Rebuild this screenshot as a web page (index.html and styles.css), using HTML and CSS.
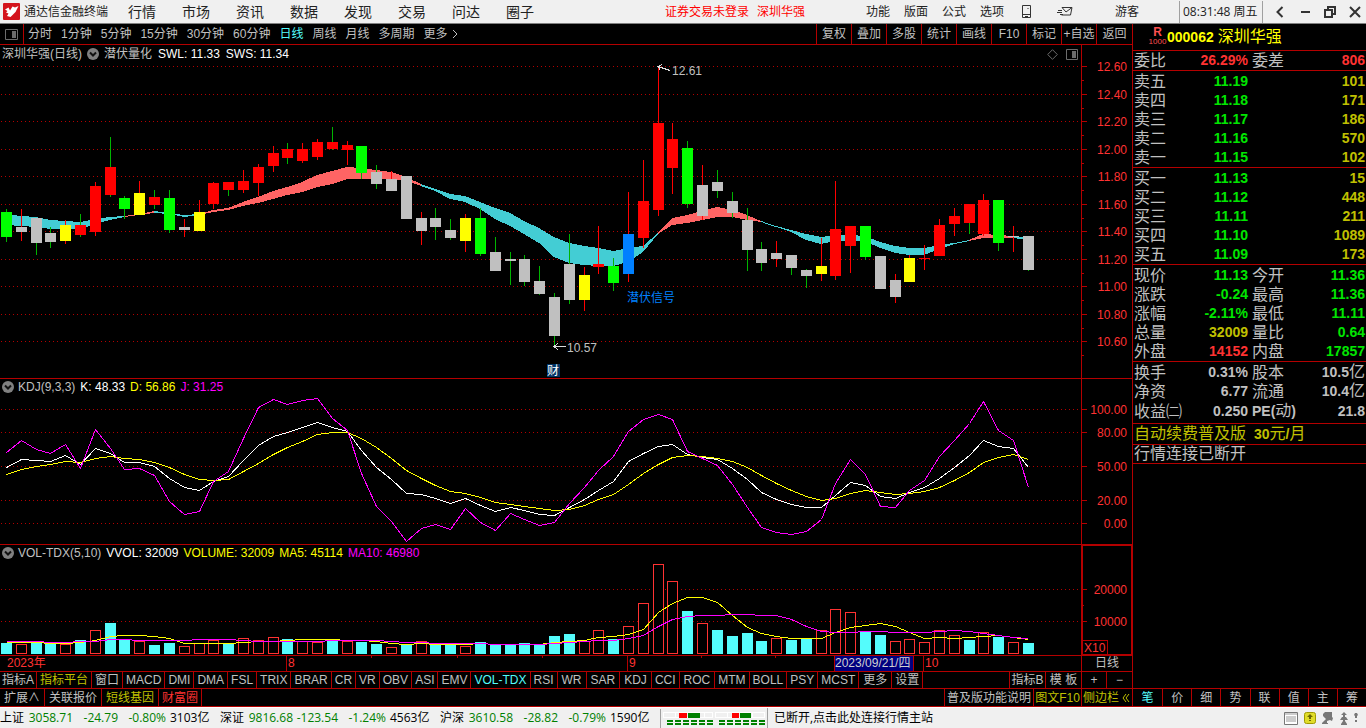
FILE: index.html
```html
<!DOCTYPE html>
<html lang="zh-CN">
<head>
<meta charset="utf-8">
<title>通达信金融终端</title>
<link rel="stylesheet" href="styles.css">
</head>
<body>
<header class="titlebar">
  <svg class="logo" width="17" height="17" viewBox="0 0 17 17" aria-hidden="true"><rect width="17" height="17" rx="1" fill="#d4141c"/><path d="M2 6.500 5.500 4.500 7 7.500 9.500 3.500 12 4.500 15.500 3 12.500 9 7.500 14 4 13 5.500 10.500 3 9.500 4.500 8z" fill="#fff"/></svg>
  <h1 class="app-name">通达信金融终端</h1>
  <nav class="menu">
    <button>行情</button><button>市场</button><button>资讯</button><button>数据</button><button>发现</button><button>交易</button><button>问达</button><button>圈子</button>
  </nav>
  <p class="login-note"><span>证券交易未登录</span><span>深圳华强</span></p>
  <nav class="tools">
    <button>功能</button><button>版面</button><button>公式</button><button>选项</button>
  </nav>
  <div class="title-icons">
    <button aria-label="手机"><svg width="10" height="14" viewBox="0 0 10 14"><path d="M.5.5h8v12h-8zM.5 9.500h8M3 11.500h3M5.500 3.500h1" fill="none" stroke="#333"/></svg></button>
    <button aria-label="邮件"><svg width="16" height="12" viewBox="0 0 16 12"><path d="M5 1.500h10L13.500 9H4.500M5 1.500 9 6l6-4.500M1 4.500h4M0 6.500h5M3 8.500h3" fill="none" stroke="#333"/></svg></button>
  </div>
  <button class="guest">游客</button>
  <time class="clock">08:31:48 周五</time>
  <div class="window-buttons">
    <button aria-label="返回"><svg width="14" height="14" viewBox="0 0 14 14"><path d="M9.500 2 4.500 7l5 5" class="thick"/></svg></button>
    <button aria-label="最小化"><svg width="14" height="14" viewBox="0 0 14 14"><path d="M3 7h9" class="thick"/></svg></button>
    <button aria-label="还原"><svg width="14" height="14" viewBox="0 0 14 14"><path d="M2 5h7v7H2zM5 5V2h7v7H9" class="thick"/></svg></button>
    <button aria-label="关闭"><svg width="14" height="14" viewBox="0 0 14 14"><path d="m2 2 10 10M12 2 2 12" class="thick"/></svg></button>
  </div>
</header>

<div class="workspace">
  <main class="charts">
    <div class="toolbar">
      <button class="layout-toggle" aria-label="布局"><svg width="13" height="11" viewBox="0 0 13 11"><path d="M.5.5h12v10H.5z" fill="none" stroke="#6c6c6c"/><path d="M7 2h4v7H7z" fill="#6c6c6c"/></svg></button>
      <nav class="periods">
        <button>分时</button><button>1分钟</button><button>5分钟</button><button>15分钟</button><button>30分钟</button><button>60分钟</button><button class="current">日线</button><button>周线</button><button>月线</button><button>多周期</button><button class="more">更多<svg width="6" height="10" viewBox="0 0 6 10"><path d="m1 1 4 4-4 4" fill="none" stroke="#c0c0c0"/></svg></button>
      </nav>
      <nav class="actions">
        <button>复权</button><button>叠加</button><button>多股</button><button>统计</button><button>画线</button><button>F10</button><button>标记</button><button>+自选</button><button class="last">返回</button>
      </nav>
    </div>

    <div class="panels">
    <section class="panel">
      <div class="plot">
        <div class="head head-price">
          <span>深圳华强(日线)</span><svg class="fold" viewBox="0 0 12 12"><circle cx="6" cy="6" r="6"/><path d="m3 4.500 3 3 3-3"/></svg><span>潜伏量化</span><span class="white pad">SWL: 11.33</span><span class="white pad">SWS: 11.34</span>
          <span class="head-icons"><svg width="11" height="11" viewBox="0 0 11 11"><path d="M5.500.7 10.300 5.500 5.500 10.300.7 5.500z" fill="none" stroke="#6c6c6c"/></svg><svg width="12" height="11" viewBox="0 0 12 11"><path d="M.5.5h11v10H.5z" fill="none" stroke="#6c6c6c"/><path d="M6 2h4v7H6z" fill="#6c6c6c"/></svg></span>
        </div>
        <svg id="price" class="canvas" viewBox="0 63 1081 315" preserveAspectRatio="none"></svg>
      </div>
      <svg id="price-axis" class="axis" viewBox="1082 45 50 333" preserveAspectRatio="none"></svg>
    </section>

    <section class="panel">
      <div class="plot">
        <div class="head">
          <svg class="fold" viewBox="0 0 12 12"><circle cx="6" cy="6" r="6"/><path d="m3 4.500 3 3 3-3"/></svg><span>KDJ(9,3,3)</span><span class="white">K: 48.33</span><span class="yellow">D: 56.86</span><span class="magenta">J: 31.25</span>
        </div>
        <svg id="kdj" class="canvas" viewBox="0 395 1081 149" preserveAspectRatio="none"></svg>
      </div>
      <svg id="kdj-axis" class="axis" viewBox="1082 379 50 165" preserveAspectRatio="none"></svg>
    </section>

    <section class="panel">
      <div class="plot">
        <div class="head">
          <svg class="fold" viewBox="0 0 12 12"><circle cx="6" cy="6" r="6"/><path d="m3 4.500 3 3 3-3"/></svg><span>VOL-TDX(5,10)</span><span class="white">VVOL: 32009</span><span class="yellow">VOLUME: 32009</span><span class="yellow">MA5: 45114</span><span class="magenta">MA10: 46980</span>
        </div>
        <svg id="volume" class="canvas" viewBox="0 561 1081 94" preserveAspectRatio="none"></svg>
      </div>
      <svg id="volume-axis" class="axis axis-selected" viewBox="1082 545 50 110" preserveAspectRatio="none"></svg>
    </section>
    </div>

    <div class="timeline">
      <div class="months"><span class="first">2023年</span><span>8</span><span>9</span><span class="cursor"><time>2023/09/21/四</time></span><span>10</span></div>
      <span class="period-name">日线</span>
    </div>

    <div class="tabs">
      <nav class="cells">
        <button class="tight">指标A</button><button class="gold">指标平台</button><button>窗口</button><button>MACD</button><button>DMI</button><button>DMA</button><button>FSL</button><button>TRIX</button><button>BRAR</button><button>CR</button><button>VR</button><button>OBV</button><button>ASI</button><button>EMV</button><button class="current">VOL-TDX</button><button>RSI</button><button class="roomy">WR</button><button class="roomy">SAR</button><button class="roomy">KDJ</button><button>CCI</button><button class="roomy">ROC</button><button>MTM</button><button>BOLL</button><button>PSY</button><button>MCST</button><button class="roomy">更多</button><button>设置</button>
      </nav>
      <nav class="cells cells-right">
        <button class="slot">指标B</button><button class="slot">模 板</button><button class="zoom">+</button><button class="zoom last">−</button>
      </nav>
    </div>

    <div class="tabs tabs-extra">
      <nav class="cells">
        <button class="roomy">扩展∧</button><button class="roomy">关联报价</button><button class="gold roomy">短线基因</button><button class="red">财富圈</button>
      </nav>
      <nav class="cells cells-right">
        <button class="tight">普及版功能说明</button><button class="gold link-f10">图文F10</button><button class="gold side-toggle last">侧边栏<svg width="8" height="10" viewBox="0 0 8 10"><path d="m4 1-3 4 3 4M7 1 4 5l3 4" fill="none" stroke="#c0c000"/></svg></button>
      </nav>
    </div>
  </main>

  <aside class="quote">
    <h2 class="stock"><span class="badge"><b>R</b><i>1000</i></span><b>000062</b><span>深圳华强</span></h2>
    <table class="quotes">
      <colgroup><col class="c-label"><col class="c-value"><col class="c-label2"><col></colgroup>
      <tbody class="red single">
        <tr><th>委比</th><td>26.29%</td><th>委差</th><td>806</td></tr>
      </tbody>
      <tbody class="book">
        <tr><th>卖五</th><td>11.19</td><td colspan="2">101</td></tr>
        <tr><th>卖四</th><td>11.18</td><td colspan="2">171</td></tr>
        <tr><th>卖三</th><td>11.17</td><td colspan="2">186</td></tr>
        <tr><th>卖二</th><td>11.16</td><td colspan="2">570</td></tr>
        <tr><th>卖一</th><td>11.15</td><td colspan="2">102</td></tr>
      </tbody>
      <tbody class="book">
        <tr><th>买一</th><td>11.13</td><td colspan="2">15</td></tr>
        <tr><th>买二</th><td>11.12</td><td colspan="2">448</td></tr>
        <tr><th>买三</th><td>11.11</td><td colspan="2">211</td></tr>
        <tr><th>买四</th><td>11.10</td><td colspan="2">1089</td></tr>
        <tr><th>买五</th><td>11.09</td><td colspan="2">173</td></tr>
      </tbody>
      <tbody class="green">
        <tr><th>现价</th><td>11.13</td><th>今开</th><td>11.36</td></tr>
        <tr><th>涨跌</th><td>-0.24</td><th>最高</th><td>11.36</td></tr>
        <tr><th>涨幅</th><td>-2.11%</td><th>最低</th><td>11.11</td></tr>
        <tr><th>总量</th><td class="gold">32009</td><th>量比</th><td>0.64</td></tr>
        <tr><th>外盘</th><td class="red">14152</td><th>内盘</th><td>17857</td></tr>
      </tbody>
      <tbody class="basics">
        <tr><th>换手</th><td>0.31%</td><th>股本</th><td>10.5<span class="unit">亿</span></td></tr>
        <tr><th>净资</th><td>6.77</td><th>流通</th><td>10.4<span class="unit">亿</span></td></tr>
        <tr><th>收益㈡</th><td>0.250</td><th><span class="pe">PE(</span>动<span class="pe">)</span></th><td>21.8</td></tr>
      </tbody>
    </table>
    <p class="notice gold"><span>自动续费普及版</span><span><b>30</b>元<b>/</b>月</span></p>
    <p class="notice notice-last">行情连接已断开</p>
    <nav class="side-tabs">
      <button class="current">笔</button><button>价</button><button>细</button><button>势</button><button>联</button><button>值</button><button>主</button><button>筹</button>
    </nav>
  </aside>
</div>

<footer class="status">
  <div class="index"><span>上证</span><span class="num">3058.71</span><span class="num">-24.79</span><span class="num">-0.80%</span><span class="sum">3103亿</span></div>
  <div class="index"><span>深证</span><span class="num">9816.68</span><span class="num">-123.54</span><span class="num">-1.24%</span><span class="sum">4563亿</span></div>
  <div class="index"><span>沪深</span><span class="num">3610.58</span><span class="num">-28.82</span><span class="num">-0.79%</span><span class="sum">1590亿</span></div>
  <div class="link">
    <svg width="102" height="15" viewBox="0 0 102 15" shape-rendering="crispEdges" aria-hidden="true">
      <g fill="none" stroke="#fff"><path d="M.5 1.500h49v5H.5zM12.500 1.500v5M41.500 1.500v5M52.500 1.500h49v5h-49zM64.500 1.500v5M89.500 1.500v5"/></g>
      <path d="M16 2h8v5h-8zM69 2h7v5h-7z" fill="#f00"/><path d="M25 2h12v5H25zM77 2h11v5H77z" fill="#008000"/>
      <path d="M4 10h46M4 13h46M56 10h46M56 13h46" stroke="#008000" stroke-width="2" stroke-dasharray="6 2"/>
    </svg>
  </div>
  <span class="link-state">已断开,点击此处连接行情主站</span>
  <div class="tray">
    <svg width="14" height="13" viewBox="0 0 14 13"><path d="M.5.5h13v12H.5z" fill="#fff" stroke="#777"/><path d="M1 2h12M2 5h10M2 7h10M2 9h10" stroke="#999"/></svg>
    <svg width="12" height="12" viewBox="0 0 12 12"><rect x=".5" y=".5" width="11" height="11" rx="2" fill="#e0dc28" stroke="#a09a00"/><path d="M6 2 9 5H7v2H5V5H3zM5 8h2v1H5z" fill="#6c6800"/></svg>
    <svg width="12" height="13" viewBox="0 0 12 13"><path d="M1 2 3 0h7v5l1 1-1 3-2-1-3 1v2h1v1H0v-1l2-2 2-2-3-3z" fill="#777"/></svg>
    <svg width="8" height="13" viewBox="0 0 8 13"><path d="m4 0 3 3H5v2h1l2 3H5v1l2 3v1H1v-1l2-3V8H0l2-3h1V3H1z" fill="#777"/></svg>
    <svg width="4" height="13" viewBox="0 0 4 13"><path d="M1 1h2l1 2-1 1v2H1V4L0 3zM1 8h2v2H1z" fill="#777"/></svg>
  </div>
</footer>
<script src="charts.js"></script>
</body>
</html>
```

FILE: styles.css
```css
* { box-sizing: border-box; }

:root {
  --line: #b40000;
  --silver: #c0c0c0;
  --red: #ff3232;
  --gold: #c0c000;
  --cyan: #54fcfc;
}

body {
  margin: 0;
  height: 100vh;
  display: flex;
  flex-direction: column;
  overflow: hidden;
  background: #000;
  color: var(--silver);
  font: 400 12px/16px "Liberation Sans", "Noto Sans CJK SC", sans-serif;
  white-space: nowrap;
}

h1, h2, p { margin: 0; font-size: inherit; font-weight: inherit; }

button {
  padding: 0;
  border: 0;
  background: none;
  color: inherit;
  font: inherit;
  white-space: nowrap;
  cursor: pointer;
}

svg { display: block; flex: none; }

.white { color: #fff; }
.yellow { color: #ff0; }
.magenta { color: #f0f; }
.gold { color: var(--gold); }
.red { color: var(--red); }
.green { color: #00e600; }
.current { color: var(--cyan); }

/* Title bar */
.titlebar {
  flex: none;
  display: flex;
  align-items: center;
  height: 24px;
  padding: 0 4px 0 3px;
  border-bottom: 1px solid #808080;
  background: #f0f0f0;
  color: #222;
}
.app-name { margin-left: 4px; }
.menu { display: flex; gap: 26px; margin-left: 20px; font-size: 14px; }
.login-note { display: flex; gap: 8px; margin-left: auto; color: #f00; }
.tools { display: flex; gap: 14px; margin-left: 61px; }
.title-icons { display: flex; align-items: center; gap: 25px; margin-left: 18px; }
.guest { margin: 0 40px 0 42px; }
.clock {
  width: 84px;
  padding: 3px;
  border: solid #a0a0a0;
  border-width: 0 1px;
  font-family: "Open Sans", "Noto Sans CJK SC", sans-serif;
}
.window-buttons { display: flex; gap: 11px; margin-left: 10px; }
.thick { fill: none; stroke: #333; stroke-width: 2; }

/* Workspace */
.workspace {
  flex: 1;
  min-height: 0;
  display: grid;
  grid-template-columns: minmax(0, 1fr) 234px;
}
.charts { display: flex; flex-direction: column; min-height: 0; }

.toolbar {
  flex: none;
  display: flex;
  height: 21px;
  border-bottom: 1px solid var(--line);
}
.layout-toggle { padding: 0 5px; border-right: 1px solid var(--line); }
.periods { display: flex; gap: 9px; padding-left: 4px; }
.more { display: flex; align-items: center; gap: 4px; }
.actions { display: flex; margin-left: auto; border-left: 1px solid var(--line); }
.actions button { width: 35px; border-right: 1px solid var(--line); }
.actions .last { border-right: 0; }

/* Chart panels */
.panels {
  flex: 1;
  min-height: 0;
  display: grid;
  grid-template-rows: minmax(0, 334fr) minmax(0, 166fr) minmax(0, 111fr);
}
.panel { display: flex; min-height: 0; border-bottom: 1px solid var(--line); }
.plot { flex: 1; min-width: 0; display: flex; flex-direction: column; }
.head { flex: none; display: flex; align-items: center; gap: 5px; height: 16px; padding-left: 2px; }
.head-price { height: 18px; gap: 5px; }
.pad { margin-left: 1px; }
.head-icons { display: flex; gap: 8px; margin-left: auto; padding-right: 3px; }
.fold { width: 12px; height: 12px; }
.head:not(.head-price) .fold { margin-right: -1px; }
.fold circle { fill: #808080; }
.fold path { fill: none; stroke: #111; stroke-width: 2; }
.canvas { flex: 1; min-height: 0; width: 100%; overflow: visible; }
.axis { width: 51px; height: 100%; border-left: 1px solid var(--line); }
.axis-selected { box-shadow: inset 0 0 0 1px var(--line); }

.canvas, .axis { shape-rendering: crispEdges; font-size: 12px; }
.grid { stroke: #b40000; stroke-dasharray: 1 3; }
.tick { stroke: var(--line); fill: none; }
.axis text { fill: var(--red); text-anchor: end; }
.axis .scale { text-anchor: start; }
.note { fill: var(--silver); }
.arrow { stroke: #dcdcdc; fill: none; }
.signal { fill: #0080ff; }
.event { fill: #003264; }
.event-text { fill: #fff; }
.k { stroke: #fff; fill: none; }
.d { stroke: #ff0; fill: none; }
.j { stroke: #f0f; fill: none; }
.vol-up { fill: #000; stroke: var(--red); }
.vol-down { fill: var(--cyan); }

/* Time axis */
.timeline {
  flex: none;
  display: flex;
  height: 16px;
  border-bottom: 1px solid var(--line);
  line-height: 15px;
}
.months {
  flex: 1;
  display: grid;
  grid-template-columns: 286fr 341fr 207fr 89fr 158fr;
  color: var(--red);
}
.months > span { border-left: 1px solid var(--line); padding-left: 1px; }
.months .first { border-left: 0; padding-left: 7px; }
.months .cursor { padding-left: 0; }
.cursor time {
  display: block;
  width: 79px;
  background: #000080;
  color: #d0d0d0;
  border-right: 1px solid var(--line);
}
.period-name { width: 51px; border-left: 1px solid var(--line); text-align: center; }

/* Indicator tabs */
.tabs {
  flex: none;
  display: flex;
  justify-content: space-between;
  height: 17px;
  border-bottom: 1px solid var(--line);
}
.tabs-extra { height: 18px; }
.cells { display: flex; }
.cells button { padding: 0 3px; border-right: 1px solid var(--line); }
.cells .tight { padding: 0 2px; }
.cells .roomy { padding: 0 4px; }
.cells-right { border-left: 1px solid var(--line); }
.cells .slot { width: 36px; padding: 0; }
.cells .zoom { width: 25px; padding: 0; }
.cells .link-f10 { width: 48px; padding: 0; }
.cells .side-toggle { display: flex; align-items: center; gap: 3px; width: 50px; padding: 0 1px; }
.cells .last { border-right: 0; }

/* Quote panel */
.quote { display: flex; flex-direction: column; border-left: 1px solid var(--line); font-size: 16px; }
.stock {
  display: flex;
  align-items: center;
  gap: 4px;
  height: 27px;
  padding-left: 16px;
  border-bottom: 1px solid var(--line);
  color: #ff0;
}
.stock > b { font-size: 14px; }
.badge {
  display: flex;
  flex-direction: column;
  align-items: center;
  width: 17px;
  margin-right: -3px;
  color: #ff5050;
  line-height: 10px;
}
.badge b { font-size: 12px; }
.badge i { font-size: 8px; font-style: normal; }

.quotes { width: 100%; table-layout: fixed; border-collapse: separate; border-spacing: 0; }
.c-label { width: 50px; }
.c-value { width: 65px; }
.c-label2 { width: 52px; }
.quotes th, .quotes td { padding: 0; height: 19px; line-height: 19px; }
.quotes th { padding-left: 1px; text-align: left; font-weight: 400; color: var(--silver); }
.quotes td + th { padding-left: 4px; }
.quotes td { text-align: right; font-size: 14px; font-weight: 700; }
.quotes td:last-child { padding-right: 1px; }
.quotes tr:last-child > * { border-bottom: 1px solid var(--line); height: 20px; }
.quotes tr:first-child > * { padding-top: 1px; height: 20px; }
.quotes .single tr > * { padding-top: 0; }
.basics tr:last-child > * { height: 22px; padding-bottom: 2px; }
.book td { color: #00e600; }
.book td:last-child { color: var(--gold); }
.quotes .unit { font-size: 16px; font-weight: 400; line-height: 16px; }
.pe { font-size: 14px; font-weight: 700; }
.notice {
  display: flex;
  gap: 8px;
  height: 21px;
  padding-left: 1px;
  border-bottom: 1px solid var(--line);
  line-height: 19px;
}
.notice-last { height: 19px; line-height: 17px; }
.notice b { font-size: 14px; }
.side-tabs {
  display: grid;
  grid-template-columns: repeat(8, 1fr);
  height: 19px;
  margin-top: auto;
  border: solid var(--line);
  border-width: 1px 0;
  font-size: 12px;
}
.side-tabs button + button { border-left: 1px solid var(--line); }

/* Status bar */
.status {
  flex: none;
  display: flex;
  align-items: center;
  height: 21px;
  border-top: 1px solid #fff;
  background: #f0f0f0;
  color: #000;
  font-family: "Open Sans", "Noto Sans CJK SC", sans-serif;
}
.index { display: grid; grid-template-columns: 25px 48px 45px 48px 54px; }
.num { color: #008000; text-align: right; }
.sum { padding-left: 4px; }
.link { padding: 2px; border-left: 1px solid #a0a0a0; }
.link-state { border-left: 1px solid #a0a0a0; padding-left: 6px; line-height: 20px; }
.tray { display: flex; align-items: center; gap: 6px; margin-left: auto; padding-right: 8px; }
```

FILE: charts.js
```js
const X0 = 6.5, STEP = 14.81;
const x = i => Math.floor(X0 + STEP * i);
const fills = { G: '#00ff00', W: '#c0c0c0', Y: '#ffff00', R: '#ff0000', B: '#0080ff' };
const wicks = { g: '#00b400', r: '#ff0000' };

// body colour, body top, body bottom, wick top, wick bottom, wick colour
const candles = `G 212 237 209 242 g|W 227 232 209 241 r|W 218 243 218 255 g|W 233 242 227 248 g|Y 225 241 220 244 r|R 225 235 214 237 g|R 186 232 182 236 r|R 167 195 137 197 g|G 198 209 196 219 g|Y 193 215 181 215 r
R 197 205 190 209 g|G 198 230 190 233 g|W 227 230 219 237 r|Y 212 231 200 231 r|R 183 204 182 209 r|R 182 190 182 196 g|R 181 190 170 193 r|R 167 183 164 196 r|R 153 166 146 172 r|R 149 158 143 164 g
R 149 161 143 163 r|R 142 157 139 160 r|R 142 149 127 150 g|R 145 150 141 165 r|G 146 173 146 179 g|W 172 184 165 189 g|W 179 191 171 191 r|W 176 219 176 219 g|W 218 231 212 245 r|W 218 227 208 240 g
W 230 238 219 240 g|Y 218 241 214 252 r|G 218 254 208 256 g|W 252 271 237 271 g|W 259 261 252 285 g|W 259 282 255 286 g|W 281 294 266 295 g|W 297 336 293 346 g|W 264 300 234 304 g|Y 275 300 267 311 r
R 264 267 226 274 r|G 266 283 258 291 g|B 234 274 192 282 r|R 201 238 160 248 r|R 123 210 66 216 r|R 139 168 123 194 r|G 148 204 141 208 g|W 185 216 165 220 r|W 182 191 170 198 g|W 201 213 192 218 g
W 220 250 208 271 g|W 249 263 242 271 g|W 253 259 241 267 r|W 255 268 255 275 g|W 270 276 269 288 g|Y 266 274 238 281 r|R 229 276 181 280 r|R 226 246 226 273 r|G 226 257 226 260 g|W 256 289 256 289 g
W 280 297 274 303 r|Y 258 282 255 282 r|R 258 259 245 270 r|R 225 256 219 256 r|R 216 224 208 236 r|R 204 223 204 234 g|R 200 234 194 236 r|G 200 243 200 251 g|W 236 237 226 252 r|W 236 270 236 271 g`
  .split(/[|\n]/).map(s => s.split(' '));

const upper = [214,216,217,220,221,222,219,217,216,214,211,213,215,214,210,208,202,197,191,187,182,175,171,167,168,170,172,177,184,189,194,196,202,208,213,221,228,237,243,246,248,251,248,246,233,218,215,211,207,210,215,221,226,230,234,237,235,235,236,242,246,248,248,245,243,240,234,235,236,238];
const lower = [225,226,227,229,229,229,224,220,217,215,213,214,217,215,212,210,206,203,199,195,192,187,184,179,179,179,179,181,186,191,199,202,209,219,226,234,243,257,263,265,266,266,262,252,234,225,223,220,217,217,220,222,227,232,240,244,241,241,241,248,253,255,255,249,244,241,238,238,238,240];
const ribbon = [[0,8,'c'],[8,10,'r'],[10,13,'c'],[13,28,'r'],[28,44,'c'],[44,51,'r'],[51,65,'c'],[65,68,'r'],[68,69,'c']];

const K = [467,459,460,461,455,464,448,453,462,462,466,478,487,490,481,476,460,445,436,432,427,422,427,431,450,467,479,493,494,498,503,498,505,511,507,510,514,515,507,499,490,481,461,453,446,444,454,457,459,468,479,492,499,504,507,507,495,482,485,496,498,492,487,478,467,455,440,446,448,467];
const D = [474,469,466,464,461,462,458,456,458,459,462,467,474,479,480,479,471,463,454,447,441,434,432,432,438,447,458,470,478,485,491,493,497,502,504,506,508,510,509,505,499,494,484,473,464,457,455,456,458,461,467,475,483,490,496,500,498,493,490,492,494,493,491,487,480,472,462,457,454,459];
const J = [452,440,449,453,444,468,429,448,469,468,475,501,514,511,481,471,438,407,399,404,400,398,418,430,473,506,521,541,528,524,529,508,522,530,513,519,525,522,503,487,470,456,431,419,414,419,451,458,465,484,507,527,532,534,531,519,483,459,474,506,507,490,480,456,440,423,401,430,440,487];

const volumes = 'c643 r644 c643 c644 r644 c640 r630 c623 c640 r641 c645 c643 r646 r643 r640 c644 r638 r640 r637 c639 r641 r642 c640 r641 c642 c644 r647 c644 r641 c645 c645 r646 c642 c645 c645 c643 c645 c636 c634 r641 r630 c639 r626 r603 r564 r581 c611 r623 c630 c636 c633 c641 r638 c640 c639 r630 r609 r612 c632 c635 r641 r639 r642 r630 r635 c640 r632 c637 r642 c643'.split(' ');
const MA5 = [642,642,642,643,643,642,640,636,635,635,636,638,643,643,643,643,642,641,641,640,639,639,639,640,640,641,643,644,643,644,644,644,643,644,644,644,644,642,641,640,637,636,634,629,612,603,597,597,602,615,627,633,636,638,638,638,632,627,625,623,626,632,638,637,638,637,636,635,637,639];
const MA10 = [641,641,641,642,642,641,641,639,639,640,640,640,640,639,639,639,640,641,641,641,641,641,640,640,640,640,641,642,642,643,643,643,643,644,644,644,644,643,642,641,640,640,638,635,626,619,616,615,615,614,614,615,615,619,626,631,632,632,631,631,632,632,632,631,630,631,633,635,637,638];

const put = (id, markup) => { document.getElementById(id).innerHTML = markup; };
const grid = ys => ys.map(y => `<path class="grid" d="M1 ${y + .5}H1081"/>`).join('');
const line = (cls, ys) => `<polyline class="${cls}" points="${ys.map((y, i) => `${x(i) + .5},${y + .5}`).join(' ')}"/>`;

function drawPrice() {
  const ys = [66, 94, 121, 149, 176, 204, 231, 259, 286, 314, 341];
  let out = grid(ys);
  for (const [a, b, c] of ribbon) {
    const up = [], down = [];
    for (let i = a; i <= b; i++) {
      up.push(`${x(i)},${upper[i]}`);
      down.unshift(`${x(i)},${lower[i]}`);
    }
    out += `<polygon points="${up.concat(down).join(' ')}" fill="${c === 'c' ? '#43cdd4' : '#ff6464'}"/>`;
  }
  candles.forEach(([f, t, b, wt, wb, w], i) => {
    out += `<rect x="${x(i)}" y="${wt}" width="1" height="${wb - wt}" fill="${wicks[w]}"/>`;
    out += `<rect x="${x(i) - 5}" y="${t}" width="11" height="${b - t}" fill="${fills[f]}"/>`;
  });
  out += '<path class="arrow" d="M670 70.500 658 66.500M662 64.500 658 66.500 660 70"/><text class="note" x="672" y="75">12.61</text>';
  out += '<path class="arrow" d="M566 346.500H554M558 343.500 554 346.500 558 349.500"/><text class="note" x="567" y="352">10.57</text>';
  out += '<text class="signal" x="627" y="302">潜伏信号</text>';
  out += '<rect class="event" x="547" y="364" width="13" height="13"/><text class="event-text" x="547" y="375">财</text>';
  put('price', out);
  put('price-axis', ys.map((y, i) => `<path class="tick" d="M1082 ${y + .5}h5M1082 ${y + 14.5}h2"/><text x="1127" y="${y + 5}">${(12.6 - i * .2).toFixed(2)}</text>`).join(''));
}

function drawKdj() {
  const marks = [[409, '100.00'], [432, '80.00'], [466, '50.00'], [500, '20.00'], [523, '0.00']];
  put('kdj', grid(marks.map(m => m[0])) + line('k', K) + line('d', D) + line('j', J));
  put('kdj-axis', marks.map(([y, t]) => `<path class="tick" d="M1082 ${y + .5}h5"/><text x="1127" y="${y + 5}">${t}</text>`).join(''));
}

function drawVolume() {
  let out = grid([589, 621]);
  volumes.forEach((v, i) => {
    const top = +v.slice(1), left = x(i) - 5;
    out += v[0] === 'c'
      ? `<rect class="vol-down" x="${left}" y="${top}" width="11" height="${654 - top}"/>`
      : `<rect class="vol-up" x="${left + .5}" y="${top + .5}" width="10" height="${653 - top}"/>`;
  });
  out += line('d', MA5) + line('j', MA10);
  out += [371, 457, 542, 701, 775].map(t => `<path class="tick" d="M${t + .5} 656v2"/>`).join('');
  put('volume', out);
  put('volume-axis', '<path class="tick" d="M1082 589.500h5M1082 605.500h2M1082 621.500h5M1082 640.500h25.500v14"/><text x="1127" y="594">20000</text><text x="1127" y="626">10000</text><text class="scale" x="1084" y="652">X10</text>');
}

drawPrice();
drawKdj();
drawVolume();
```
